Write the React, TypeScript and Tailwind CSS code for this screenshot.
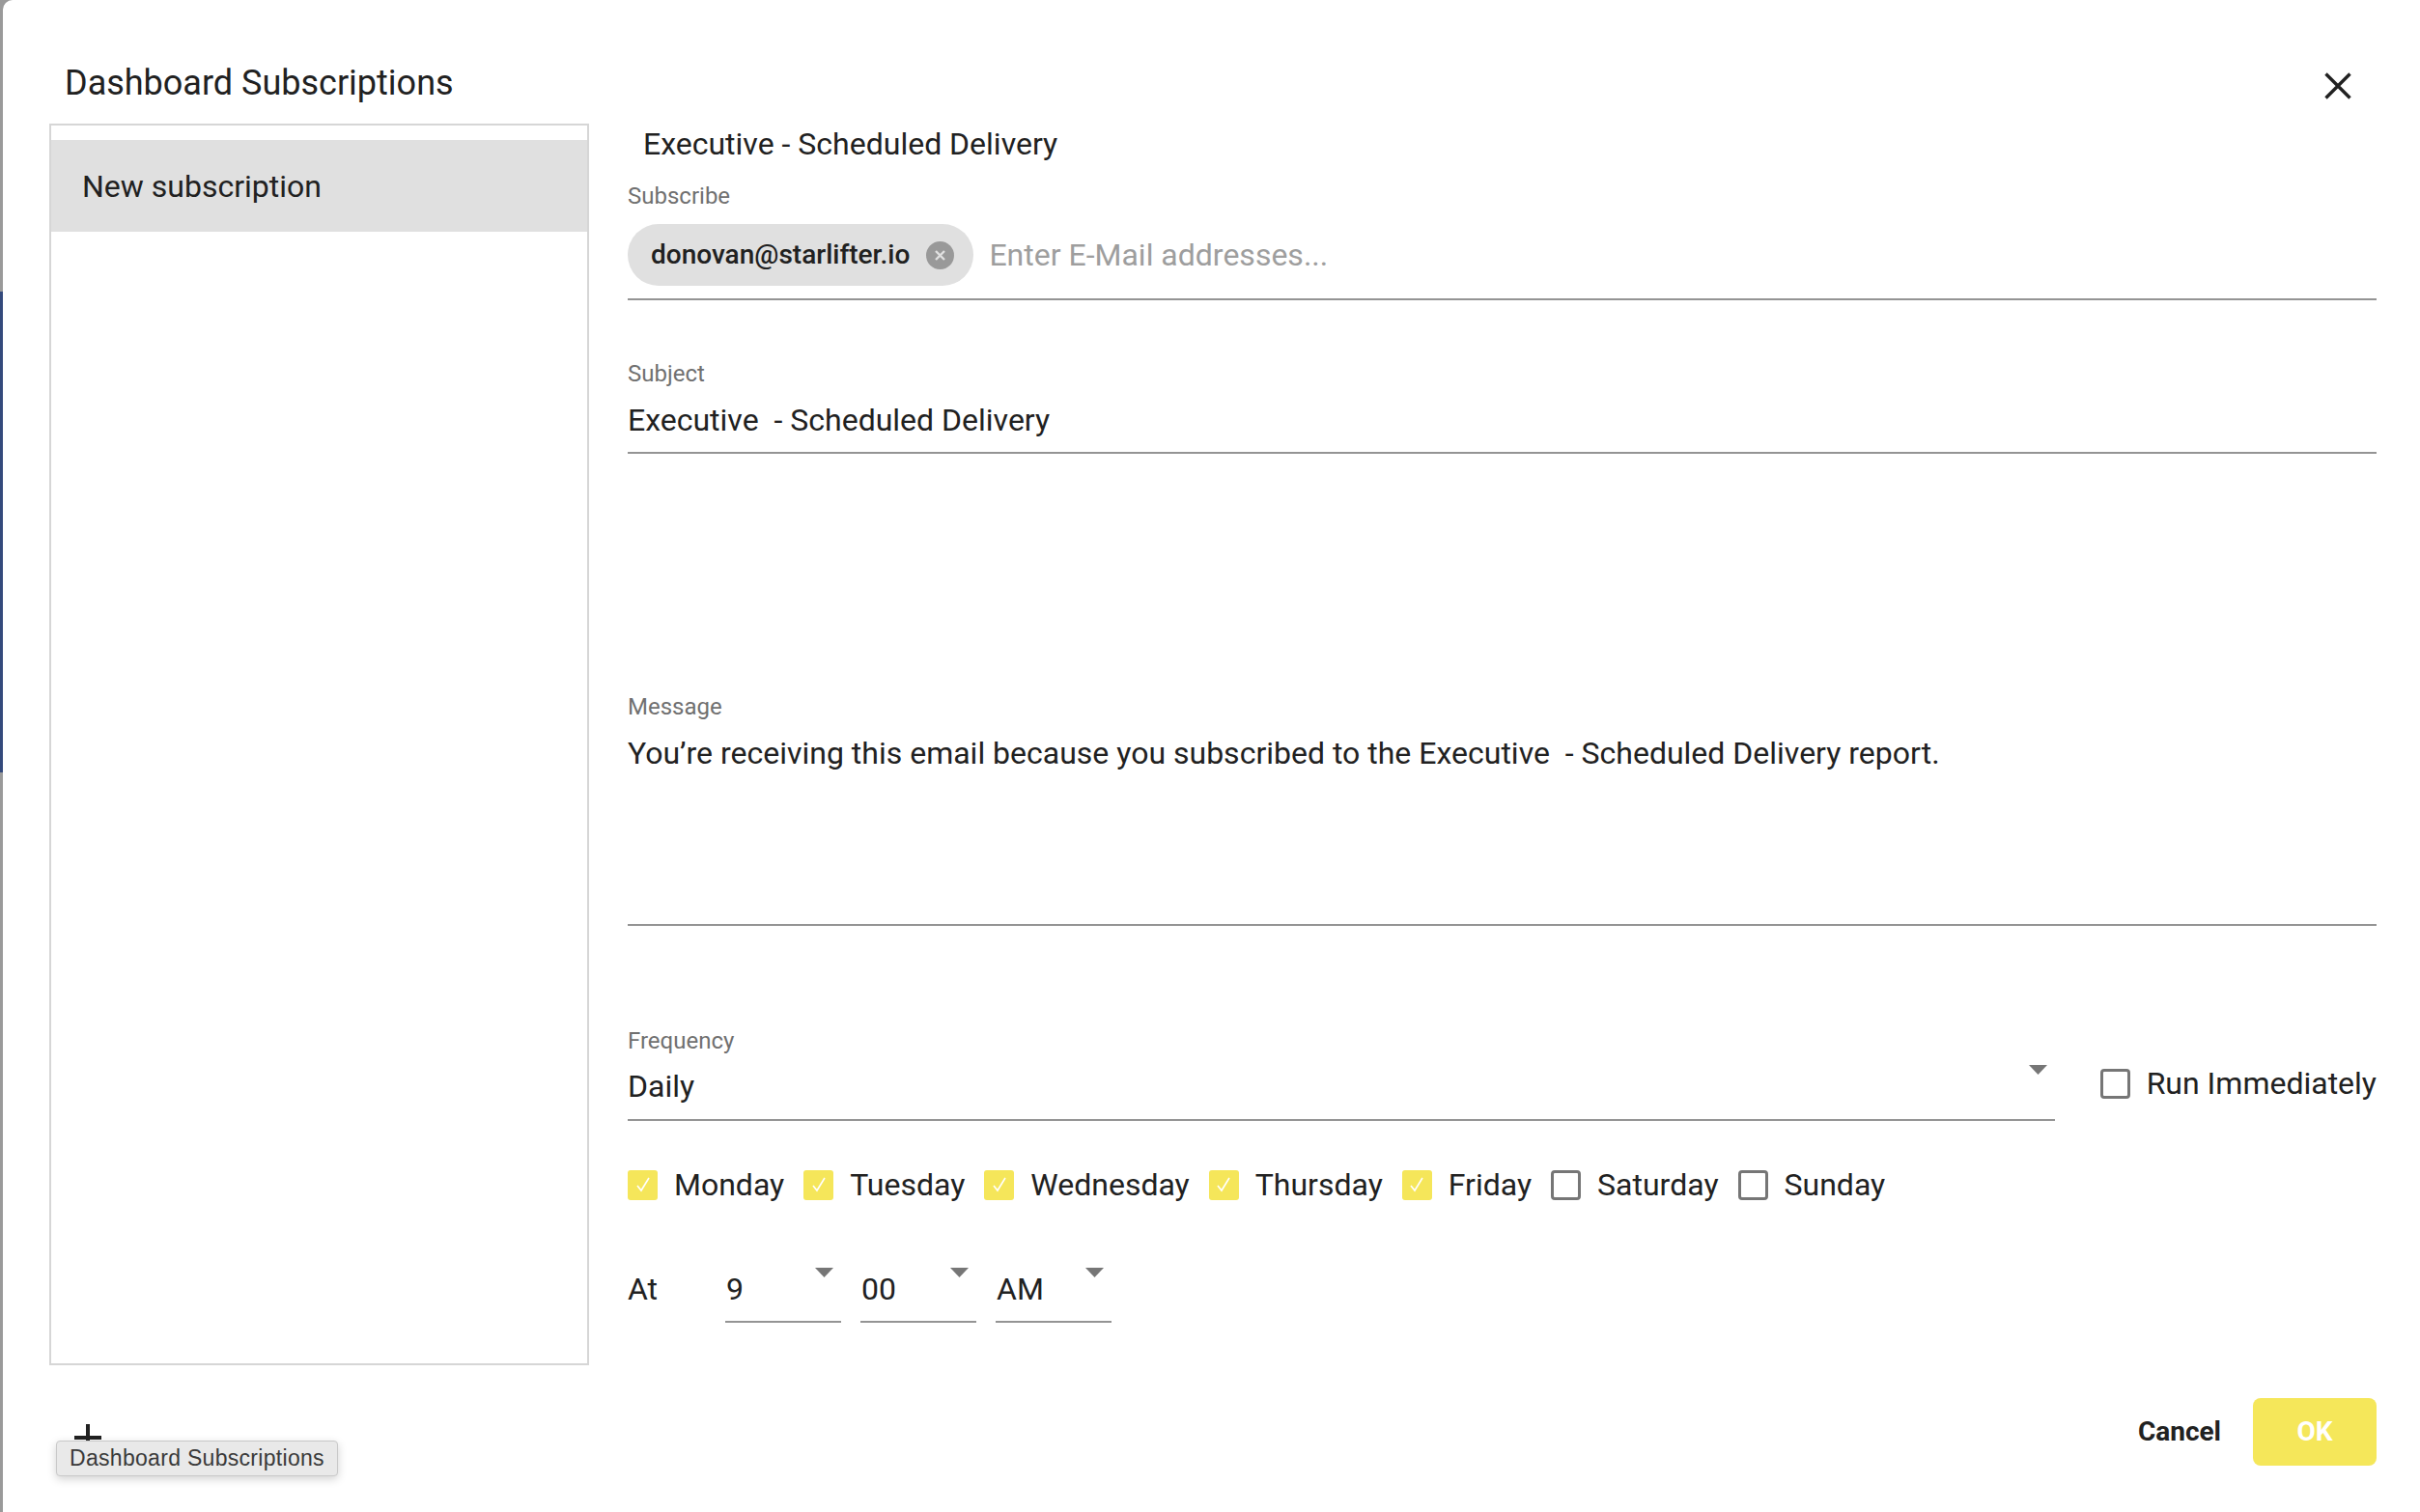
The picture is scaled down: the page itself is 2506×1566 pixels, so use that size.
import React from 'react';

const days = [
  { name: 'Monday', on: true },
  { name: 'Tuesday', on: true },
  { name: 'Wednesday', on: true },
  { name: 'Thursday', on: true },
  { name: 'Friday', on: true },
  { name: 'Saturday', on: false },
  { name: 'Sunday', on: false },
];

function Arrow() {
  return (
    <svg width="19" height="10" viewBox="0 0 19 10" className="shrink-0">
      <path d="M0 0 L19 0 L9.5 10 Z" fill="#767676" />
    </svg>
  );
}

function Check({ on }: { on: boolean }) {
  if (on) {
    return (
      <span className="flex h-[31px] w-[31px] shrink-0 items-center justify-center rounded-[3px] bg-[#f5e65a]">
        <svg width="20" height="20" viewBox="0 0 20 20">
          <path d="M4 11 L8 16 L16 3" fill="none" stroke="#ffffff" strokeWidth="1.6" />
        </svg>
      </span>
    );
  }
  return <span className="h-[31px] w-[31px] shrink-0 rounded-[4px] border-[3px] border-[#767676]" />;
}

function TimeSelect({ value }: { value: string }) {
  return (
    <div className="w-[120px] border-b-2 border-[#949494] pb-[13px]">
      <div className="flex items-start justify-between">
        <span className="pl-[1px] text-[32px] leading-[40px]">{value}</span>
        <span className="mr-[8px] mt-[-2px]">
          <Arrow />
        </span>
      </div>
    </div>
  );
}

export default function App() {
  return (
    <div className="flex h-[1566px] w-[2506px] overflow-hidden bg-[#9a9a9a] font-['Roboto',sans-serif] text-[#212121]">
      <div className="flex w-[3px] shrink-0 flex-col">
        <div className="h-[302px] bg-[#9a9a9a]" />
        <div className="h-[498px] bg-[#344a7c]" />
        <div className="flex-1 bg-[#9a9a9a]" />
      </div>

      <div className="relative flex flex-1 flex-col rounded-tl-[10px] bg-white">
        {/* header */}
        <div className="flex h-[128px] items-start justify-between pl-[64px] pr-[71px] pt-[65px]">
          <h2 className="text-[36px] leading-[42px]">Dashboard Subscriptions</h2>
          <svg width="28" height="28" viewBox="0 0 28 28" className="mt-[10px]">
            <path d="M1.5 1.5 L26.5 26.5 M26.5 1.5 L1.5 26.5" stroke="#212121" strokeWidth="3.4" />
          </svg>
        </div>

        {/* body */}
        <div className="flex gap-[40px] pl-[48px] pr-[45px]">
          <div className="h-[1286px] w-[559px] shrink-0 border-2 border-[#d6d6d6] pt-[15px]">
            <div className="flex h-[95px] items-center bg-[#e0e0e0] pl-[32px] text-[32px]">New subscription</div>
          </div>

          <div className="flex flex-1 flex-col">
            <div className="mt-[1px] pl-[16px] text-[32px] leading-[40px]">Executive - Scheduled Delivery</div>

            <div className="mt-[20px] text-[24px] leading-[28px] text-[#707070]">Subscribe</div>
            <div className="mt-[15px] flex items-center gap-[16px] border-b-2 border-[#949494] pb-[13px]">
              <div className="flex h-[64px] items-center gap-[17px] rounded-full bg-[#e0e0e0] pl-[24px] pr-[20px]">
                <span className="text-[28px] font-medium">donovan@starlifter.io</span>
                <span className="flex h-[29px] w-[29px] items-center justify-center rounded-full bg-[#999999]">
                  <svg width="13" height="13" viewBox="0 0 13 13">
                    <path d="M2 2 L11 11 M11 2 L2 11" stroke="#e0e0e0" strokeWidth="2.4" />
                  </svg>
                </span>
              </div>
              <span className="text-[32px] text-[#9e9e9e]">Enter E-Mail addresses...</span>
            </div>

            <div className="mt-[62px] text-[24px] leading-[28px] text-[#707070]">Subject</div>
            <div className="mt-[14px] whitespace-pre border-b-2 border-[#949494] pb-[13px] text-[32px] leading-[40px]">
              {'Executive  - Scheduled Delivery'}
            </div>

            <div className="mt-[248px] text-[24px] leading-[28px] text-[#707070]">Message</div>
            <div className="mt-[14px] h-[199px] whitespace-pre border-b-2 border-[#949494] text-[32px] leading-[40px]">
              {'You\u2019re receiving this email because you subscribed to the Executive  - Scheduled Delivery report.'}
            </div>

            <div className="mt-[105px] flex items-center">
              <div className="min-w-0 flex-1 border-b-2 border-[#949494] pb-[14px]">
                <div className="text-[24px] leading-[28px] text-[#707070]">Frequency</div>
                <div className="mt-[13px] flex items-start justify-between">
                  <span className="text-[32px] leading-[40px]">Daily</span>
                  <span className="mr-[8px] mt-[-2px]">
                    <Arrow />
                  </span>
                </div>
              </div>
              <div className="ml-[47px] mt-[19px] flex shrink-0 items-center gap-[17px]">
                <Check on={false} />
                <span className="whitespace-nowrap text-[32px] leading-[40px]">Run Immediately</span>
              </div>
            </div>

            <div className="mt-[46px] flex h-[40px] items-center gap-[20px]">
              {days.map((d) => (
                <div key={d.name} className="flex items-center gap-[17px]">
                  <Check on={d.on} />
                  <span className="text-[32px] leading-[40px]">{d.name}</span>
                </div>
              ))}
            </div>

            <div className="mt-[68px] flex items-start">
              <span className="w-[101px] text-[32px] leading-[40px]">At</span>
              <div className="flex gap-[20px]">
                <TimeSelect value="9" />
                <TimeSelect value="00" />
                <TimeSelect value="AM" />
              </div>
            </div>
          </div>
        </div>

        {/* footer */}
        <div className="mt-[34px] flex h-[70px] items-center justify-between pl-[74px] pr-[45px]">
          <svg width="28" height="28" viewBox="0 0 28 28" className="mt-[12px]">
            <path d="M14 0 V28 M0 14 H28" stroke="#212121" strokeWidth="4" />
          </svg>
          <div className="flex items-center gap-[33px]">
            <button className="text-[28px] font-bold text-[#212121]">Cancel</button>
            <button className="h-[70px] w-[128px] rounded-[8px] bg-[#f5e75a] text-[28px] font-bold text-white">OK</button>
          </div>
        </div>

        <div className="absolute left-[55px] top-[1492px] rounded-[4px] border border-[#c9c9c9] bg-[#e9e9e9] px-[13px] py-[4px] font-['Liberation_Sans',sans-serif] text-[23px] leading-[27px] tracking-[0.3px] text-[#3a3a3a] shadow-[0_3px_10px_rgba(0,0,0,0.18)]">
          Dashboard Subscriptions
        </div>
      </div>
    </div>
  );
}
